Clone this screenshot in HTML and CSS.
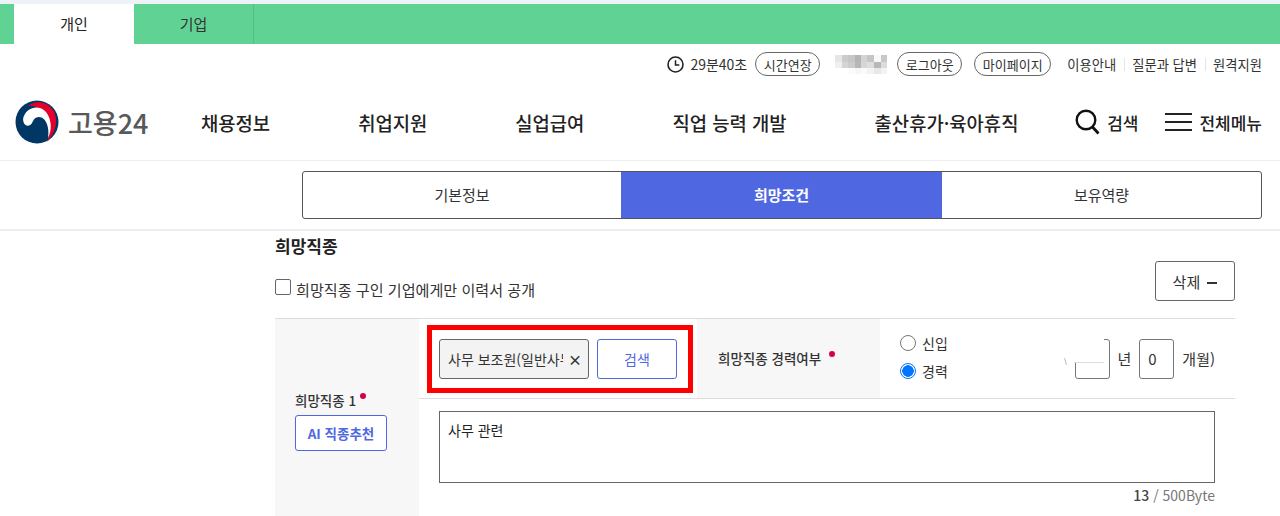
FILE: index.html
```html
<!DOCTYPE html>
<html lang="ko">
<head>
  <meta charset="UTF-8" />
  <title>고용24</title>
  <link rel="stylesheet" href="styles.css">
</head>
<body>
  <div class="topbar">
    <a class="top-tab selected">개인</a>
    <a class="top-tab">기업</a>
  </div>

  <div class="util">
    <svg class="clock" width="17" height="17" viewBox="0 0 17 17">
      <circle cx="8.500" cy="8.500" r="7.500" fill="none" stroke="#222" stroke-width="1.600"/>
      <path d="M8.500 4.200v4.800h3.800" fill="none" stroke="#222" stroke-width="1.500"/>
    </svg>
    <span class="timer">29분40초</span>
    <button class="pill pill-time">시간연장</button>
    <span class="blurname"></span>
    <button class="pill pill-out">로그아웃</button>
    <button class="pill pill-my">마이페이지</button>
    <a class="util-link first">이용안내</a>
    <a class="util-link">질문과 답변</a>
    <a class="util-link">원격지원</a>
  </div>

  <header class="header">
    <div class="logo">
      <svg width="44" height="44" viewBox="0 0 44 44">
        <circle cx="22" cy="22" r="21.500" fill="#003764"/>
        <path d="M13 6C20 0 32 1 38 10c6 10 3 22-6 32 4-9 5-19-1-27-5-7-13-10-18-9z" fill="#e4002b"/>
        <path d="M8.500 17C12 7 24 4 31 12c6 8 6 18 2 26 2-10-2-21-9-21-4 0-5.500 3-6.500 5-2 5-7.500 5-9 0-.5-2-.5-3 0-5z" fill="#fff"/>
      </svg>
      <span class="logo-text">고용24</span>
    </div>
    <nav class="gnb">
      <a>채용정보</a>
      <a>취업지원</a>
      <a>실업급여</a>
      <a>직업 능력 개발</a>
      <a>출산휴가·육아휴직</a>
    </nav>
    <div class="head-tools">
      <a class="tool tool-search">
        <svg width="25" height="26" viewBox="0 0 25 26">
          <circle cx="11" cy="11" r="9.300" fill="none" stroke="#111" stroke-width="2.400"/>
          <path d="M17.500 18l6 6.500" stroke="#111" stroke-width="2.800"/>
        </svg>
        검색
      </a>
      <a class="tool">
        <svg width="27" height="20" viewBox="0 0 27 20">
          <path d="M0 2h27M0 10h27M0 18h27" stroke="#222" stroke-width="2.200"/>
        </svg>
        전체메뉴
      </a>
    </div>
  </header>

  <div class="step-wrap">
    <div class="steps">
      <a class="step step-first">기본정보</a>
      <a class="step selected">희망조건</a>
      <a class="step">보유역량</a>
    </div>
  </div>

  <main class="content">
    <h2 class="title">희망직종</h2>
    <div class="option-row">
      <label class="check"><span class="checkbox"></span>희망직종 구인 기업에게만 이력서 공개</label>
      <button class="btn-del">삭제 <span class="minus"></span></button>
    </div>

    <div class="form-table">
      <div class="side">
        <div class="side-label">희망직종 1<i class="req"></i></div>
        <button class="btn-ai">AI 직종추천</button>
      </div>
      <div class="fields">
        <div class="field-row">
          <div class="job-cell">
            <div class="job-tag"><span class="job-name">사무 보조원(일반사무)</span><span class="job-x">×</span></div>
            <button class="btn-search">검색</button>
            <div class="highlight"></div>
          </div>
          <div class="field-label">희망직종 경력여부<i class="req"></i></div>
          <div class="career">
            <div class="radios">
              <label class="radio"><span class="dot"></span>신입</label>
              <label class="radio"><span class="dot on"></span>경력</label>
            </div>
            <div class="period">
              <span class="num-box year"><span class="erase"></span></span>
              <span>년</span>
              <span class="num-box">0</span>
              <span class="month">개월)</span>
            </div>
          </div>
        </div>
        <div class="memo-row">
          <div class="memo">사무 관련</div>
          <div class="count"><b>13</b> / 500Byte</div>
        </div>
      </div>
    </div>
  </main>
</body>
</html>
```
FILE: styles.css
```css
* {
  margin: 0;
  padding: 0;
  box-sizing: border-box;
  font-family: "Noto Sans CJK KR", "Noto Sans", sans-serif;
}
html, body {
  height: 516px;
  overflow: hidden;
  background: #fff;
  color: #222;
}
button {
  background: #fff;
  cursor: pointer;
}

/* top strip */
.topbar {
  display: flex;
  height: 44px;
  padding-left: 14px;
  background: #60d394;
  border-top: 4px solid #eef1f5;
}
.top-tab {
  width: 120px;
  text-align: center;
  font-size: 15px;
  line-height: 40px;
  color: #333;
}
.top-tab.selected {
  background: #fff;
  color: #222;
}
.top-tab + .top-tab {
  border-right: 1px solid #52bf84;
}

/* util row */
.util {
  display: flex;
  align-items: center;
  justify-content: flex-end;
  height: 40px;
  padding-right: 18px;
  font-size: 13.300px;
  color: #333;
}
.clock {
  margin-right: 6px;
}
.timer {
  margin-right: 8px;
  font-size: 14px;
}
.pill {
  width: 65px;
  height: 24px;
  border: 1px solid #666;
  border-radius: 12px;
  font-size: 13px;
  color: #333;
}
.pill-out {
  margin-right: 12px;
}
.pill-my {
  width: 77px;
}
.blurname {
  width: 52px;
  height: 19px;
  margin: 0 10px 0 15px;
  background:
    linear-gradient(90deg, #e8e6e4 0 13%, #ccc 13% 25%, #c6c6c6 25% 38%, #b6b4b8 38% 50%, #d6d3d0 50% 62%, #c4c6ca 62% 75%, #f8fafa 75% 88%, #c8c8cc 88%) 0 0 / 100% 7px no-repeat,
    linear-gradient(90deg, #f2f0ee 0 13%, #d4d4d4 13% 25%, #ccc 25% 38%, #b8b6ba 38% 50%, #d8d5d2 50% 62%, #e0dedc 62% 75%, #b8b8bc 75% 88%, #dcdce0 88%) 0 7px / 100% 6px no-repeat,
    linear-gradient(90deg, #fff 0 25%, #fbfbfb 25% 38%, #f6f6f6 38% 50%, #fafafa 50% 62%, #f2f2f2 62% 75%, #e8e8e6 75% 88%, #f0f2f4 88%) 0 13px / 100% 6px no-repeat;
}
.util-link {
  padding: 0 8px 0 7px;
  border-left: 1px solid #e4e4e4;
  line-height: 13px;
}
.util-link.first {
  margin-left: 9px;
  border-left: none;
}
.util-link:last-child {
  padding-right: 0;
}

/* header */
.header {
  display: flex;
  align-items: center;
  height: 77px;
  padding: 0 18px 0 15px;
  border-bottom: 1px solid #eee;
}
.logo {
  display: flex;
  align-items: center;
  flex-shrink: 0;
  width: 186px;
  gap: 9px;
}
.logo-text {
  font-size: 27px;
  font-weight: 500;
  color: #58595b;
}
.gnb {
  display: flex;
  gap: 88px;
  font-size: 18.800px;
  font-weight: 500;
  color: #222;
}
.head-tools {
  display: flex;
  align-items: center;
  gap: 27px;
  margin-left: auto;
  font-size: 17px;
  font-weight: 500;
}
.tool {
  display: flex;
  align-items: center;
  gap: 7px;
}

/* step tabs */
.step-wrap {
  height: 70px;
  padding: 10px 18px 0 302px;
  border-bottom: 2px solid #eee;
}
.steps {
  display: flex;
  height: 48px;
  border: 1px solid #555;
  border-radius: 3px;
}
.step {
  flex: 1;
  text-align: center;
  font-size: 15px;
  line-height: 46px;
  color: #333;
}
.step-first {
  flex: 0 0 318px;
}
.step.selected {
  flex: 0 0 321px;
  background: #4f68e2;
  color: #fff;
  font-weight: 700;
}

/* content */
.content {
  width: 960px;
  margin-left: 275px;
}
.title {
  margin-top: 3px;
  font-size: 17px;
  font-weight: 700;
  line-height: 24px;
}
.option-row {
  display: flex;
  justify-content: space-between;
  height: 60px;
  padding-top: 3px;
}
.check {
  display: flex;
  align-items: center;
  height: 48px;
  padding-top: 7px;
  font-size: 15.100px;
  color: #333;
}
.checkbox {
  width: 16px;
  height: 16px;
  margin-right: 5px;
  margin-top: -3px;
  border: 1px solid #666;
  border-radius: 2px;
}
.btn-del {
  width: 80px;
  height: 40px;
  border: 1px solid #666;
  border-radius: 3px;
  font-size: 15px;
  color: #333;
}
.minus {
  display: inline-block;
  width: 10px;
  height: 2px;
  margin-left: 3px;
  vertical-align: middle;
  background: #333;
}

.form-table {
  display: flex;
  height: 200px;
  border-top: 1px solid #ddd;
}
.side {
  width: 144px;
  padding: 67px 0 0 20px;
  background: #f7f7f7;
}
.side-label {
  font-size: 13.500px;
  font-weight: 500;
  line-height: 29px;
  color: #333;
}
.req {
  display: inline-block;
  width: 6px;
  height: 6px;
  margin-left: 4px;
  vertical-align: 7px;
  border-radius: 50%;
  background: #d6004f;
}
.btn-ai {
  width: 92px;
  height: 36px;
  border: 1px solid #4f68e2;
  border-radius: 3px;
  font-size: 13.500px;
  font-weight: 700;
  color: #4f68e2;
}
.fields {
  flex: 1;
}
.field-row {
  display: flex;
  height: 80px;
  border-bottom: 1px solid #ddd;
}
.job-cell {
  position: relative;
  display: flex;
  align-items: center;
  gap: 8px;
  width: 278px;
  padding-left: 20px;
}
.job-tag {
  display: flex;
  align-items: center;
  width: 150px;
  height: 40px;
  padding: 0 8px;
  border: 1px solid #666;
  border-radius: 3px;
  background: #f3f3f3;
  font-size: 14px;
  color: #333;
}
.job-name {
  flex-shrink: 0;
  width: 115px;
  overflow: hidden;
  white-space: nowrap;
}
.job-x {
  margin-left: 5px;
  font-size: 14px;
  font-weight: 700;
  line-height: 1;
}
.btn-search {
  width: 80px;
  height: 40px;
  border: 1px solid #4f68e2;
  border-radius: 3px;
  font-size: 14px;
  color: #4f68e2;
}
.highlight {
  position: absolute;
  left: 8px;
  top: 6px;
  width: 266px;
  height: 68px;
  border: 5px solid #f00;
}
.field-label {
  width: 183px;
  padding-left: 21px;
  background: #f7f7f7;
  font-size: 13.500px;
  font-weight: 500;
  line-height: 78px;
  color: #333;
}
.field-label .req {
  margin-left: 8px;
}
.career {
  flex: 1;
  display: flex;
  justify-content: space-between;
  align-items: center;
  padding: 0 20px;
}
.radios {
  display: flex;
  flex-direction: column;
  gap: 8px;
  margin-top: -4px;
}
.radio {
  display: flex;
  align-items: center;
  gap: 6px;
  height: 20px;
  font-size: 14px;
  color: #333;
}
.dot {
  width: 16px;
  height: 16px;
  border: 1px solid #777;
  border-radius: 50%;
}
.dot.on {
  border: 1px solid #0075ff;
  background: radial-gradient(circle, #0075ff 0 5.500px, #fff 6px);
}
.period {
  display: flex;
  align-items: center;
  gap: 8px;
  font-size: 15px;
  color: #333;
}
.num-box {
  position: relative;
  width: 35px;
  height: 40px;
  padding-left: 8px;
  border: 1px solid #777;
  border-radius: 3px;
  font-size: 15px;
  line-height: 38px;
}
.erase {
  position: absolute;
  left: -2px;
  top: -2px;
  width: 30px;
  height: 25px;
  background: #fff;
  border-bottom: 1px solid #ddd;
}
/* leftover tick beside the scrubbed year box */
.erase::before {
  content: "";
  position: absolute;
  left: -9px;
  top: 20px;
  width: 1px;
  height: 7px;
  background: #c9b8a6;
  transform: rotate(-15deg);
}
.memo-row {
  padding: 12px 20px 0;
}
.memo {
  height: 72px;
  padding: 8px;
  border: 1px solid #666;
  font-size: 14px;
  color: #222;
}
.count {
  margin-top: 2px;
  text-align: right;
  font-size: 14px;
  color: #777;
}
.count b {
  font-weight: 500;
  color: #444;
}
```
